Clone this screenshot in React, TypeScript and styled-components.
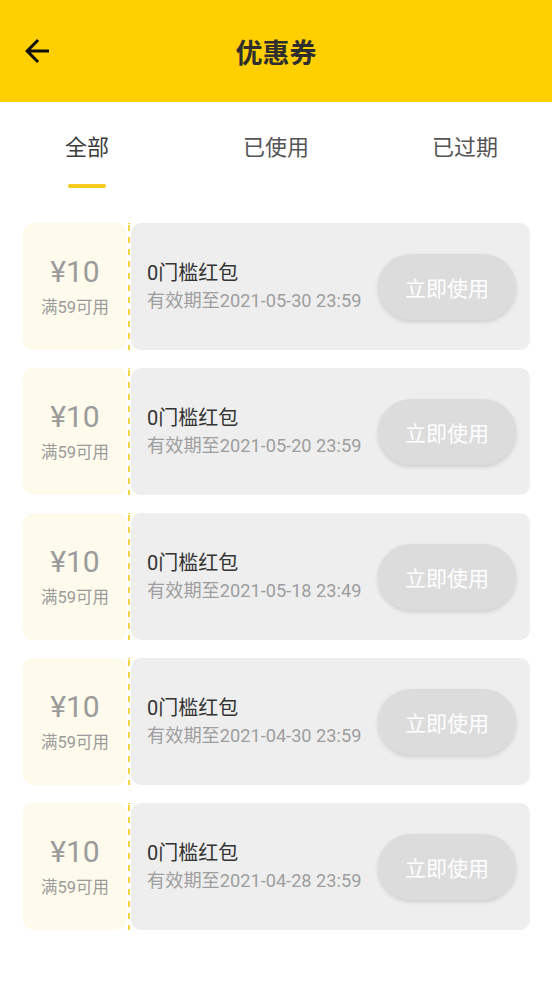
import React from "react";
import styled, { createGlobalStyle } from "styled-components";

const GlobalStyle = createGlobalStyle`
  html, body { margin: 0; padding: 0; background: #ffffff; }
  body { font-family: Roboto, "Noto Sans CJK SC", sans-serif; }
  * { box-sizing: border-box; }
`;

const Page = styled.div`
  width: 552px;
  min-height: 981px;
  background: #ffffff;
  overflow: hidden;
`;

const Header = styled.header`
  height: 102px;
  background: #ffcf00;
  display: flex;
  align-items: center;
  justify-content: center;
  position: relative;
`;

const BackButton = styled.button`
  position: absolute;
  left: 19px;
  top: 33px;
  width: 36px;
  height: 36px;
  padding: 0;
  border: none;
  background: transparent;
  display: flex;
`;

const Title = styled.h1`
  margin: 0;
  font-size: 27px;
  font-weight: 700;
  color: #2e2e2e;
  line-height: 1;
  font-family: "Noto Sans CJK SC", sans-serif;
`;

const Tabs = styled.nav`
  display: grid;
  grid-template-columns: repeat(3, 1fr);
  margin: 0 -7.5px;
  padding-top: 28px;
`;

const Tab = styled.div`
  display: flex;
  flex-direction: column;
  align-items: center;
`;

const TabLabel = styled.span<{ $active?: boolean }>`
  font-family: "Noto Sans CJK SC", sans-serif;
  font-size: 22px;
  line-height: 30px;
  color: ${(p) => (p.$active ? "#3c3c3c" : "#555555")};
`;

const Indicator = styled.div<{ $active?: boolean }>`
  margin-top: 24px;
  width: 38px;
  height: 4px;
  border-radius: 2px;
  background: ${(p) => (p.$active ? "#f5ca1c" : "transparent")};
`;

const List = styled.div`
  display: flex;
  flex-direction: column;
  gap: 18px;
  padding: 35px 22px 0 23px;
`;

const Card = styled.div`
  display: flex;
  height: 127px;
`;

const Amount = styled.div`
  width: 104px;
  background: #fefaec;
  border-radius: 10px;
  display: flex;
  flex-direction: column;
  align-items: center;
  justify-content: center;
  gap: 9px;
`;

const Money = styled.div`
  font-size: 30px;
  line-height: 34px;
  color: #9b9b9b;
`;

const Condition = styled.div`
  font-size: 16.5px;
  line-height: 20px;
  color: #9b9b9b;
`;

const Divider = styled.div`
  width: 2px;
  margin: 0 1px 0 1px;
  background: repeating-linear-gradient(
    to bottom,
    #f2d544 0px,
    #f2d544 6px,
    transparent 6px,
    transparent 12px
  );
  background-position: 0 2px;
`;

const Body = styled.div`
  flex: 1;
  background: #eeeeee;
  border-radius: 10px;
  display: flex;
  align-items: center;
  padding: 0 14px 0 16px;
`;

const Info = styled.div`
  flex: 1;
  display: flex;
  flex-direction: column;
  gap: 3px;
`;

const Name = styled.div`
  font-size: 20px;
  line-height: 26px;
  color: #333333;
`;

const Expire = styled.div`
  font-size: 18.2px;
  line-height: 24px;
  color: #9e9e9e;
`;

const UseButton = styled.button`
  width: 138px;
  height: 66px;
  border: none;
  border-radius: 33px;
  background: #dcdcdc;
  color: #ffffff;
  font-family: "Noto Sans CJK SC", sans-serif;
  font-size: 21px;
  box-shadow: 0 2px 4px rgba(0, 0, 0, 0.14);
  padding: 0;
`;

const coupons = [
  "2021-05-30 23:59",
  "2021-05-20 23:59",
  "2021-05-18 23:49",
  "2021-04-30 23:59",
  "2021-04-28 23:59",
];

const tabs = ["全部", "已使用", "已过期"];

export default function App() {
  return (
    <Page>
      <GlobalStyle />
      <Header>
        <BackButton aria-label="返回">
          <svg width="36" height="36" viewBox="0 0 24 24">
            <path
              d="M20 11H7.83l5.59-5.59L12 4l-8 8 8 8 1.41-1.41L7.83 13H20v-2z"
              fill="#111"
            />
          </svg>
        </BackButton>
        <Title>优惠券</Title>
      </Header>
      <Tabs>
        {tabs.map((t, i) => (
          <Tab key={t}>
            <TabLabel $active={i === 0}>{t}</TabLabel>
            <Indicator $active={i === 0} />
          </Tab>
        ))}
      </Tabs>
      <List>
        {coupons.map((d) => (
          <Card key={d}>
            <Amount>
              <Money>¥10</Money>
              <Condition>满59可用</Condition>
            </Amount>
            <Divider />
            <Body>
              <Info>
                <Name>0门槛红包</Name>
                <Expire>有效期至{d}</Expire>
              </Info>
              <UseButton>立即使用</UseButton>
            </Body>
          </Card>
        ))}
      </List>
    </Page>
  );
}
